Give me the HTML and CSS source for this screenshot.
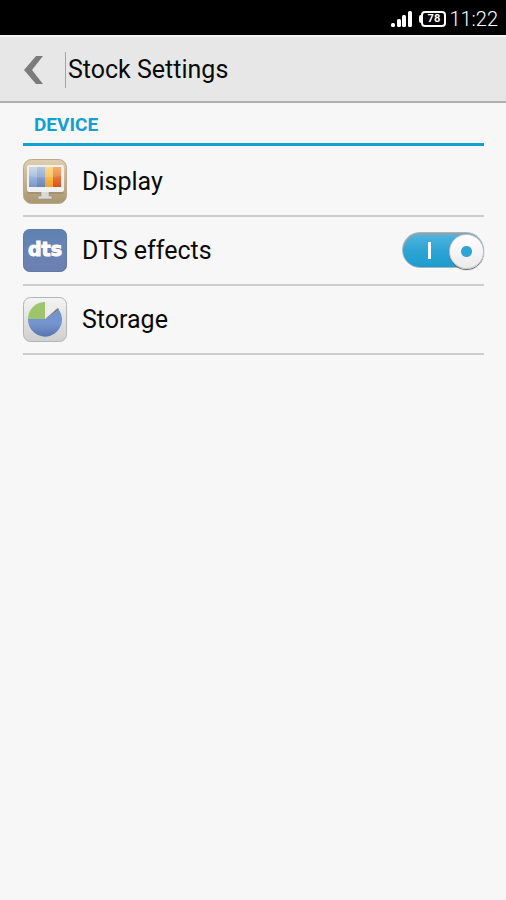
FILE: index.html
```html
<!DOCTYPE html>
<html lang="en">
<head>
    <meta charset="UTF-8">
    <meta name="viewport" content="width=device-width, initial-scale=1.0">
    <title>Stock Settings</title>
    <link rel="stylesheet" href="styles.css">
</head>
<body>

<div class="status-bar">
    <svg class="signal" width="22" height="18" viewBox="0 0 22 18" aria-hidden="true">
        <g fill="#fff">
            <rect x="1" y="13" width="4" height="4" rx="1.5"/>
            <rect x="7" y="9" width="4" height="8" rx="1.5"/>
            <rect x="12" y="5" width="4" height="12" rx="1.5"/>
            <rect x="18" y="1" width="4" height="16" rx="1.5"/>
        </g>
    </svg>
    <div class="battery">78</div>
    <div class="clock">11:22</div>
</div>

<header class="title-bar">
    <button class="back" aria-label="Back">
        <svg width="20" height="30" viewBox="0 0 20 30">
            <path d="M13 1H20L9 15L20 29H13L1 15Z" fill="#7c7c7c"/>
        </svg>
    </button>
    <h1>Stock Settings</h1>
</header>

<main>
    <h2>DEVICE</h2>
    <ul class="settings">
        <li>
            <a href="#display">
                <svg class="icon" width="44" height="45" viewBox="0 0 44 45" aria-hidden="true">
                    <defs>
                        <linearGradient id="tan" x1="0" y1="0" x2="0" y2="1">
                            <stop offset="0" stop-color="#e0cfb0"/>
                            <stop offset="1" stop-color="#a89672"/>
                        </linearGradient>
                        <linearGradient id="screenBlue" x1="0" y1="0" x2="0" y2="1">
                            <stop offset="0" stop-color="#c3d3e8"/>
                            <stop offset="1" stop-color="#7797c8"/>
                        </linearGradient>
                        <linearGradient id="screenSky" x1="0" y1="0" x2="0" y2="1">
                            <stop offset="0" stop-color="#a9bedd"/>
                            <stop offset="1" stop-color="#6684b8"/>
                        </linearGradient>
                        <linearGradient id="screenYellow" x1="0" y1="0" x2="0" y2="1">
                            <stop offset="0" stop-color="#ffd26b"/>
                            <stop offset="1" stop-color="#f0a22e"/>
                        </linearGradient>
                        <linearGradient id="screenOrange" x1="0" y1="0" x2="0" y2="1">
                            <stop offset="0" stop-color="#f5a052"/>
                            <stop offset="1" stop-color="#d94f1d"/>
                        </linearGradient>
                    </defs>
                    <rect x="0.5" y="0.5" width="43" height="44" rx="8" fill="url(#tan)" stroke="#b7a98a"/>
                    <rect x="4" y="8" width="37" height="27" rx="2" fill="#8f8065" opacity="0.5"/>
                    <path d="M18 32H26V37H29V40H15V37H18Z" fill="#d9d9d9" stroke="#8c8578" stroke-width="0.5"/>
                    <rect x="4" y="6" width="37" height="27" rx="2" fill="#eef0f3"/>
                    <rect x="6" y="8" width="8" height="20" fill="url(#screenBlue)"/>
                    <rect x="14" y="8" width="8" height="20" fill="url(#screenSky)"/>
                    <rect x="22" y="8" width="8" height="20" fill="url(#screenYellow)"/>
                    <rect x="30" y="8" width="8" height="20" fill="url(#screenOrange)"/>
                    <path d="M6 8H38V17Q22 20 6 17Z" fill="#fff" opacity="0.15"/>
                </svg>
                <span>Display</span>
            </a>
        </li>
        <li>
            <svg class="icon" width="44" height="45" viewBox="0 0 44 45" aria-hidden="true">
                <defs>
                    <linearGradient id="blue" x1="0" y1="0" x2="0" y2="1">
                        <stop offset="0" stop-color="#5d82b0"/>
                        <stop offset="0.45" stop-color="#6883b5"/>
                        <stop offset="1" stop-color="#6d80b0"/>
                    </linearGradient>
                </defs>
                <rect x="0.5" y="1.5" width="43" height="42" rx="6" fill="url(#blue)" stroke="#6179a6"/>
                <text class="logo-text" x="22" y="28" text-anchor="middle">dts</text>
            </svg>
            <label for="dts">DTS effects</label>
            <input type="checkbox" class="switch" id="dts" checked>
        </li>
        <li>
            <a href="#storage">
                <svg class="icon" width="44" height="45" viewBox="0 0 44 45" aria-hidden="true">
                    <defs>
                        <linearGradient id="silver" x1="0" y1="0" x2="0" y2="1">
                            <stop offset="0" stop-color="#f4f4f4"/>
                            <stop offset="1" stop-color="#cfcfcf"/>
                        </linearGradient>
                        <linearGradient id="pieBlue" x1="0" y1="0" x2="0" y2="1">
                            <stop offset="0" stop-color="#6f90cd"/>
                            <stop offset="0.5" stop-color="#7796d0"/>
                            <stop offset="1" stop-color="#5675b0"/>
                        </linearGradient>
                    </defs>
                    <rect x="0.5" y="0.5" width="43" height="44" rx="7" fill="url(#silver)" stroke="#b4b4b4"/>
                    <circle cx="22" cy="22" r="16" fill="#e2e2e2"/>
                    <path d="M22 22L36 13A17 17 0 1 1 5 22Z" fill="url(#pieBlue)"/>
                    <path d="M22 22H5A17 17 0 0 1 22 5Z" fill="#9fc56c"/>
                    <path d="M22 22V5A17 17 0 0 1 34 10Z" fill="#ededed"/>
                    <path d="M22 22L35 11L36 13Z" fill="#777"/>
                </svg>
                <span>Storage</span>
            </a>
        </li>
    </ul>
</main>

</body>
</html>
```

FILE: styles.css
```css
* {
    box-sizing: border-box;
}

body {
    margin: 0;
    min-height: 100vh;
    background-color: #f7f7f7;
    color: #0a0a0a;
    font-family: Roboto, 'Liberation Sans', sans-serif;
}

.status-bar {
    display: flex;
    align-items: center;
    justify-content: flex-end;
    height: 35px;
    padding: 3px 8px 0;
    background-color: #000;
    color: #fff;
}

.battery {
    position: relative;
    width: 25px;
    height: 16px;
    margin: 0 3px 0 9px;
    border: 2px solid #fff;
    border-radius: 4px;
    font-size: 11px;
    font-weight: bold;
    line-height: 12px;
    text-align: center;
}

.battery::before {
    content: '';
    position: absolute;
    top: 2px;
    left: -4px;
    width: 2px;
    height: 8px;
    border-radius: 2px 0 0 2px;
    background-color: #fff;
}

.clock {
    font-size: 20px;
    font-weight: 300;
    line-height: 24px;
}

.title-bar {
    display: flex;
    align-items: center;
    height: 68px;
    padding-top: 2px;
    border-top: 2px solid #f4f4f4;
    border-bottom: 2px solid #b0b0b0;
    background-color: #e6e7e6;
}

.back {
    display: flex;
    align-items: center;
    width: 65px;
    height: 100%;
    padding: 0 0 0 23px;
    border: none;
    background: none;
    cursor: pointer;
}

h1 {
    margin: 0;
    padding-left: 2px;
    border-left: 1px solid #a4a4a4;
    font-size: 25px;
    font-weight: normal;
    line-height: 36px;
}

main {
    padding: 0 22px 0 23px;
}

h2 {
    margin: 0;
    padding: 8px 11px 4px;
    border-bottom: 3px solid #149fd1;
    color: #149fd1;
    font-size: 19px;
    font-weight: bold;
    line-height: 28px;
}

.settings {
    margin: 0;
    padding: 2px 0 0;
    list-style: none;
}

.settings li {
    display: flex;
    align-items: center;
    height: 69px;
    border-bottom: 2px solid #cdcdcd;
    font-size: 25px;
    line-height: 32px;
}

.settings a {
    display: flex;
    flex: 1;
    align-items: center;
    color: inherit;
    text-decoration: none;
}

.settings label {
    flex: 1;
}

.icon {
    flex: none;
    margin-right: 15px;
}

.logo-text {
    fill: #fff;
    stroke: #fff;
    font-family: 'DejaVu Sans', sans-serif;
    font-size: 19px;
    font-weight: bold;
}

.switch {
    appearance: none;
    position: relative;
    width: 82px;
    height: 36px;
    margin: 0 0 2px;
    border: 1px solid #a9b4ba;
    border-radius: 18px;
    background: linear-gradient(#52b5de, #2fa5d5 50%, #1b9ccf);
    box-shadow: inset 0 2px 1px #8aa3b0, 0 1px 1px #fff;
    cursor: pointer;
}

.switch::before {
    content: '';
    position: absolute;
    top: 9px;
    left: 25px;
    width: 3px;
    height: 17px;
    background-color: #fff;
}

.switch::after {
    content: '';
    position: absolute;
    top: 1px;
    right: -1px;
    width: 33px;
    height: 33px;
    border: 1px solid #c4c4c4;
    border-radius: 50%;
    background: radial-gradient(circle, #2ea5d5 5px, transparent 6px), linear-gradient(#fff, #ebebeb);
    box-shadow: 0 1px 1px #666;
}

.switch:not(:checked) {
    background: #c8c8c8;
}

.switch:not(:checked)::before {
    left: 52px;
}

.switch:not(:checked)::after {
    right: 47px;
}
```
